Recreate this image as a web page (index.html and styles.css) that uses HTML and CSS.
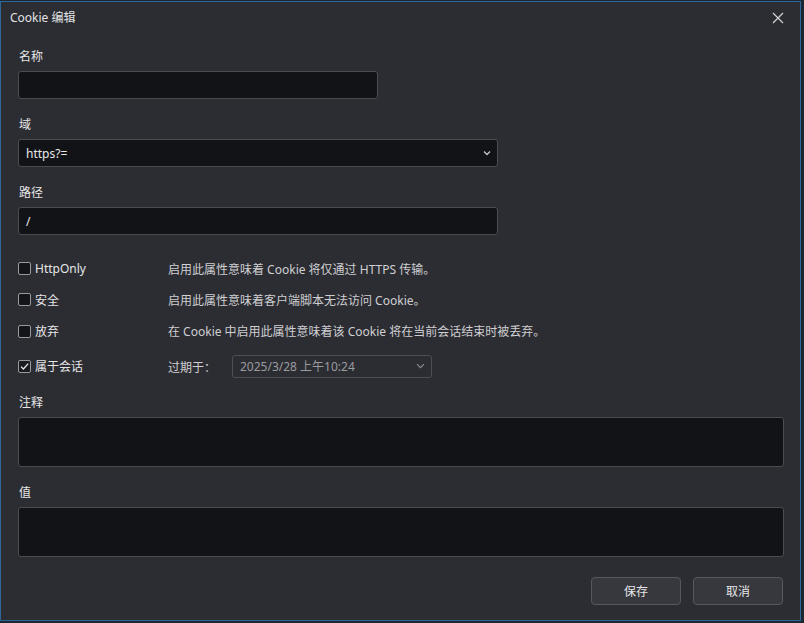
FILE: index.html
```html
<!DOCTYPE html>
<html lang="zh-CN">
<head>
<meta charset="utf-8">
<title>Cookie 编辑</title>
<link rel="stylesheet" href="styles.css">
</head>
<body>
<div class="dialog">
  <div class="titlebar">
    <span class="title">Cookie 编辑</span>
    <svg class="close" width="12" height="12" viewBox="0 0 12 12"><path d="M1 1 L11 11 M11 1 L1 11" stroke="#d4d4d6" stroke-width="1.2" fill="none"/></svg>
  </div>
  <div class="content">
    <label class="lbl">名称</label>
    <div class="input short"></div>

    <label class="lbl gap">域</label>
    <div class="input mid select">
      <span>https?=</span>
      <svg width="8" height="6" viewBox="0 0 8 6"><path d="M1 1.5 L4 4.5 L7 1.5" stroke="#c8c8c8" stroke-width="1.3" fill="none"/></svg>
    </div>

    <label class="lbl gap">路径</label>
    <div class="input mid"><span>/</span></div>

    <div class="checks">
      <div class="row">
        <div class="opt"><span class="box"></span><span>HttpOnly</span></div>
        <div class="desc">启用此属性意味着 Cookie 将仅通过 HTTPS 传输。</div>
      </div>
      <div class="row">
        <div class="opt"><span class="box"></span><span>安全</span></div>
        <div class="desc">启用此属性意味着客户端脚本无法访问 Cookie。</div>
      </div>
      <div class="row tall">
        <div class="opt"><span class="box"></span><span>放弃</span></div>
        <div class="desc">在 Cookie 中启用此属性意味着该 Cookie 将在当前会话结束时被丢弃。</div>
      </div>
      <div class="row last">
        <div class="opt"><span class="box checked"><svg width="11" height="11" viewBox="0 0 11 11"><path d="M2 5.6 L4.4 8 L9.2 2.6" stroke="#e8e8e8" stroke-width="1.3" fill="none"/></svg></span><span>属于会话</span></div>
        <div class="desc expire">过期于：</div>
        <div class="date">
          <span>2025/3/28 上午10:24</span>
          <svg width="9" height="6" viewBox="0 0 9 6"><path d="M1 1.2 L4.5 4.7 L8 1.2" stroke="#8e8f93" stroke-width="1.1" fill="none"/></svg>
        </div>
      </div>
    </div>

    <label class="lbl gap2">注释</label>
    <div class="input full area"></div>

    <label class="lbl gap3">值</label>
    <div class="input full area"></div>

    <div class="actions">
      <button class="btn">保存</button>
      <button class="btn">取消</button>
    </div>
  </div>
</div>
</body>
</html>
```

FILE: styles.css
```css
* { box-sizing: border-box; }
html, body {
  margin: 0;
  padding: 0;
  background: #1b2733;
  width: 804px;
  height: 623px;
  overflow: hidden;
  font-family: "Noto Sans", "Noto Sans CJK SC", sans-serif;
  font-size: 12px;
  color: #e2e2e4;
}
body { padding-top: 1px; }
.dialog {
  width: 801px;
  height: 620px;
  background: #2c2d32;
  border: 1px solid #2f6699;
  display: flex;
  flex-direction: column;
}
.titlebar {
  height: 32px;
  display: flex;
  align-items: center;
  justify-content: space-between;
  padding: 0 16px 0 9px;
}
.title { font-size: 12px; color: #e2e2e4; line-height: 16px; }
.close { display: block; }
.content {
  display: flex;
  flex-direction: column;
  padding: 15px 17px 0 17px;
}
.lbl {
  line-height: 16px;
  height: 16px;
  margin-bottom: 6px;
  padding-left: 1px;
  color: #e6e6e8;
}
.lbl.gap { margin-top: 18px; }
.lbl.gap2 { margin-top: 13px; }
.lbl.gap3 { margin-top: 18px; }
.input {
  height: 28px;
  background: #121317;
  border: 1px solid #4b4c51;
  border-radius: 3px;
  display: flex;
  align-items: center;
  padding: 0 7px;
  color: #e8e8ea;
}
.input.short { width: 360px; }
.input.mid { width: 480px; }
.input.full { width: 766px; }
.input.area { height: 50px; }
.select { justify-content: space-between; padding-right: 6px; }
.select svg { display: block; }
.checks {
  display: flex;
  flex-direction: column;
  margin-top: 18px;
}
.row {
  display: flex;
  align-items: center;
  height: 31px;
}
.row.tall { height: 32px; }
.row.last { height: 32px; margin-top: 3px; }
.opt {
  width: 150px;
  display: flex;
  align-items: center;
  gap: 4px;
  color: #e6e6e8;
}
.box {
  width: 13px;
  height: 13px;
  border: 1px solid #9a9b9f;
  border-radius: 2px;
  background: #141519;
  display: flex;
  align-items: center;
  justify-content: center;
}
.box.checked { background: #1a1b1f; }
.box svg { display: block; flex: none; }
.desc { color: #cfcfd2; }
.expire { width: 64px; font-family: "Noto Sans CJK JP", "Noto Sans CJK SC", sans-serif; }
.date {
  width: 200px;
  height: 23px;
  border: 1px solid #4d4e53;
  border-radius: 3px;
  display: flex;
  align-items: center;
  justify-content: space-between;
  padding: 0 6px 0 7px;
  color: #9a9b9f;
}
.date svg { display: block; }
.actions {
  display: flex;
  justify-content: flex-end;
  gap: 12px;
  margin-top: 20px;
}
.btn {
  width: 90px;
  height: 28px;
  background: #37383d;
  border: 1px solid #57585d;
  border-radius: 4px;
  color: #e6e6e8;
  font-family: "Noto Sans", "Noto Sans CJK SC", sans-serif;
  font-size: 12px;
  padding: 0;
}
```
